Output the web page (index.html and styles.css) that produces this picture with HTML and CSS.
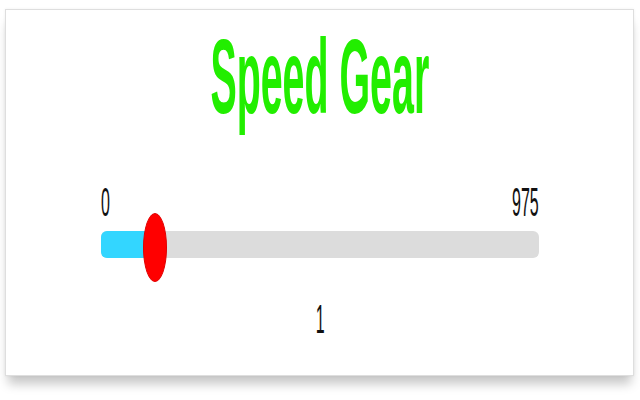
FILE: index.html
```html
<!DOCTYPE html>
<html>
<head>
<meta charset="utf-8">
<link rel="stylesheet" href="styles.css">
</head>
<body>
<div class="card">
  <h1 class="title"><span class="squeeze">Speed Gear</span></h1>
  <div class="slider">
    <div class="limits">
      <span class="num num-left">0</span>
      <span class="num num-right">975</span>
    </div>
    <div class="track">
      <div class="fill" style="width:54px"></div>
      <div class="thumb" style="left:42px"></div>
    </div>
    <div class="value"><span class="num num-center">1</span></div>
  </div>
</div>
</body>
</html>
```
FILE: styles.css
```css
html, body {
  margin: 0;
  padding: 0;
  background: #ffffff;
  font-family: "Liberation Sans", Arial, sans-serif;
}
body {
  padding: 9px 0 30px 5px;
}
.card {
  box-sizing: border-box;
  width: 629px;
  height: 367px;
  border: 1px solid #dedede;
  background: #fff;
  box-shadow: 0 11px 10px -3px rgba(0, 0, 0, 0.22), 0 0 3px rgba(0, 0, 0, 0.06);
  padding-top: 14px;
}
.title {
  margin: 0;
  font-size: 105px;
  line-height: 1;
  font-weight: bold;
  color: #22ee00;
  text-align: center;
  white-space: nowrap;
}
.squeeze {
  display: inline-block;
  transform: scaleX(0.375);
  transform-origin: center;
}
.slider {
  margin: 53px 94px 0 95px;
}
.limits {
  display: flex;
  justify-content: space-between;
  height: 40px;
}
.num {
  display: inline-block;
  font-size: 40px;
  line-height: 1;
  color: #111;
  transform: scaleX(0.4);
}
.num-left { transform-origin: left center; }
.num-right { transform-origin: right center; }
.num-center { transform-origin: center; }
.track {
  position: relative;
  margin-top: 9px;
  height: 27px;
  border-radius: 6px;
  background: #dcdcdc;
}
.fill {
  height: 100%;
  border-radius: 6px 0 0 6px;
  background: #33d6ff;
}
.thumb {
  position: absolute;
  top: -18px;
  width: 22px;
  height: 67px;
  border-radius: 50%;
  background: #ff0000;
  border: 1px solid #e00000;
}
.value {
  margin-top: 41px;
  text-align: center;
  height: 40px;
}
```
